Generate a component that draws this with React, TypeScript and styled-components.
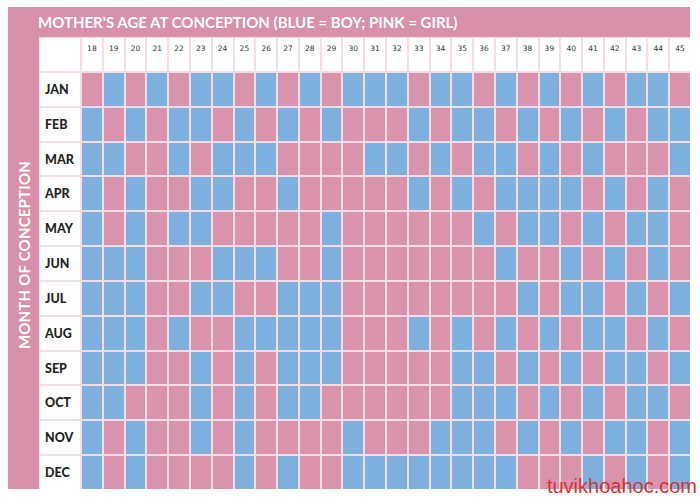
import styled, { createGlobalStyle } from "styled-components";

const AGES = Array.from({ length: 28 }, (_, i) => 18 + i);

// B = boy (blue), P = girl (pink), ages 18..45
const CHART: [string, string][] = [
  ["JAN", "PBPBPBBPBPBPBBBPBBPBPBPBPBBP"],
  ["FEB", "BPBPBBPBPBPBPPPBPBBPBPBPBPBB"],
  ["MAR", "BBPPBPBBBPPPPBBPBPBBPBPBPPPB"],
  ["APR", "BPBPPBBPPBPPPPPBPBPBBBBPBPBP"],
  ["MAY", "BPBPBBPPPPPBPPPPPPBPBBPBPBBP"],
  ["JUN", "BBBPPPBBBPPBPPPPPPPBPPBPBPBP"],
  ["JUL", "BBBPPBBPPBBBPPPPPPPPBPBBPBPB"],
  ["AUG", "BBBPBPPBBBBBPPPBPBPBPBPBBPBP"],
  ["SEP", "BBBPPBPBPBBBPPPPPBBPBPBPBBPB"],
  ["OCT", "BBPPPBPBPBBPPPPPPBBBPBPBPBBP"],
  ["NOV", "BPBPPBPBPPPPBPPPBBBPBPBPBBPB"],
  ["DEC", "BPBPPPPBPBPPBBBBBBBBPPPBPBPB"],
];

const GlobalStyle = createGlobalStyle`
  html, body {
    margin: 0;
    padding: 0;
    background: #fff;
  }
`;

const Page = styled.div`
  position: relative;
  width: 700px;
  height: 499px;
  padding: 7px 0 0 8px;
  box-sizing: border-box;
  overflow: hidden;
`;

const Frame = styled.div`
  display: grid;
  width: 682px;
  grid-template-columns: 31px 651px;
  grid-template-rows: 30px 452px;
  background: #d890ab;
`;

const Title = styled.div`
  grid-column: 1 / -1;
  display: flex;
  align-items: center;
  padding-left: 30px;
  color: #fff;
  font-family: Lato, "Open Sans", sans-serif;
  font-weight: 700;
  font-size: 15px;
`;

const Side = styled.div`
  display: flex;
  align-items: center;
  justify-content: center;
  padding-bottom: 16px;
`;

const SideText = styled.span`
  writing-mode: vertical-rl;
  transform: rotate(180deg);
  color: #fff;
  font-family: Lato, "Open Sans", sans-serif;
  font-weight: 700;
  font-size: 15px;
  letter-spacing: 0.2px;
  white-space: nowrap;
`;

const Table = styled.div`
  display: grid;
  grid-template-columns: 40px repeat(28, minmax(0, 1fr));
  grid-template-rows: 33px repeat(12, minmax(0, 1fr));
  gap: 2px;
  padding: 1px 0 0 1px;
  background: #f3dee8;
`;

const Blank = styled.div`
  background: #fff;
`;

const AgeCell = styled.div`
  background: #fff;
  padding-top: 6px;
  text-align: center;
  font-family: "DejaVu Sans", sans-serif;
  font-size: 7.5px;
  color: #333;
`;

const MonthCell = styled.div`
  background: #fff;
  display: flex;
  align-items: center;
  padding-left: 5px;
  font-family: Lato, "Open Sans", sans-serif;
  font-weight: 900;
  font-size: 12.5px;
  color: #231f20;
`;

const Cell = styled.div<{ $boy: boolean }>`
  background: ${(p) => (p.$boy ? "#7eb0de" : "#d993ac")};
`;

const Watermark = styled.span`
  position: absolute;
  right: 3px;
  bottom: 3px;
  font-family: "Liberation Sans", Arial, sans-serif;
  font-size: 20px;
  color: #d8312c;
  line-height: 1;
`;

export default function App() {
  return (
    <>
      <GlobalStyle />
      <Page>
        <Frame>
          <Title>MOTHER'S AGE AT CONCEPTION (BLUE = BOY; PINK = GIRL)</Title>
          <Side>
            <SideText>MONTH OF CONCEPTION</SideText>
          </Side>
          <Table>
            <Blank />
            {AGES.map((a) => (
              <AgeCell key={a}>{a}</AgeCell>
            ))}
            {CHART.map(([month, row]) => [
              <MonthCell key={month}>{month}</MonthCell>,
              ...row.split("").map((c, i) => (
                <Cell key={month + i} $boy={c === "B"} />
              )),
            ])}
          </Table>
        </Frame>
        <Watermark>tuvikhoahoc.com</Watermark>
      </Page>
    </>
  );
}
